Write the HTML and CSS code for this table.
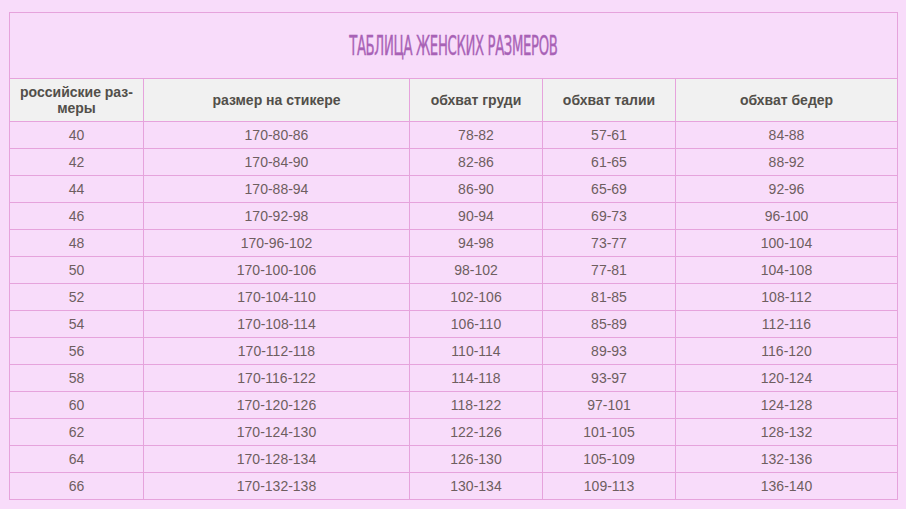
FILE: index.html
```html
<!DOCTYPE html>
<html lang="ru">
<head>
<meta charset="utf-8">
<title>Таблица женских размеров</title>
<link rel="stylesheet" href="styles.css">
</head>
<body>
<table class="sizes">
  <colgroup>
    <col class="c1"><col class="c2"><col class="c3"><col class="c4"><col class="c5">
  </colgroup>
  <thead>
    <tr class="title-row"><th colspan="5"><span class="title">ТАБЛИЦА ЖЕНСКИХ РАЗМЕРОВ</span></th></tr>
    <tr class="head-row">
      <th>российские раз-<br>меры</th>
      <th>размер на стикере</th>
      <th>обхват груди</th>
      <th>обхват талии</th>
      <th>обхват бедер</th>
    </tr>
  </thead>
  <tbody>
    <tr><td>40</td><td>170-80-86</td><td>78-82</td><td>57-61</td><td>84-88</td></tr>
    <tr><td>42</td><td>170-84-90</td><td>82-86</td><td>61-65</td><td>88-92</td></tr>
    <tr><td>44</td><td>170-88-94</td><td>86-90</td><td>65-69</td><td>92-96</td></tr>
    <tr><td>46</td><td>170-92-98</td><td>90-94</td><td>69-73</td><td>96-100</td></tr>
    <tr><td>48</td><td>170-96-102</td><td>94-98</td><td>73-77</td><td>100-104</td></tr>
    <tr><td>50</td><td>170-100-106</td><td>98-102</td><td>77-81</td><td>104-108</td></tr>
    <tr><td>52</td><td>170-104-110</td><td>102-106</td><td>81-85</td><td>108-112</td></tr>
    <tr><td>54</td><td>170-108-114</td><td>106-110</td><td>85-89</td><td>112-116</td></tr>
    <tr><td>56</td><td>170-112-118</td><td>110-114</td><td>89-93</td><td>116-120</td></tr>
    <tr><td>58</td><td>170-116-122</td><td>114-118</td><td>93-97</td><td>120-124</td></tr>
    <tr><td>60</td><td>170-120-126</td><td>118-122</td><td>97-101</td><td>124-128</td></tr>
    <tr><td>62</td><td>170-124-130</td><td>122-126</td><td>101-105</td><td>128-132</td></tr>
    <tr><td>64</td><td>170-128-134</td><td>126-130</td><td>105-109</td><td>132-136</td></tr>
    <tr><td>66</td><td>170-132-138</td><td>130-134</td><td>109-113</td><td>136-140</td></tr>
  </tbody>
</table>
</body>
</html>
```
FILE: styles.css
```css
html, body {
  margin: 0;
  padding: 0;
  background: #f8dcfa;
}
body {
  padding: 12px 0 0 9px;
  font-family: "Liberation Sans", Arial, sans-serif;
}
.sizes {
  border-collapse: collapse;
  width: 888px;
  table-layout: fixed;
}
.c1 { width: 134px; }
.c2 { width: 266px; }
.c3 { width: 133px; }
.c4 { width: 133px; }
.c5 { width: 222px; }
.sizes th, .sizes td {
  border: 1px solid #e6a3dc;
  text-align: center;
  padding: 0;
}
.title-row th {
  height: 65px;
  background: #f8dcfa;
  vertical-align: middle;
}
.title {
  display: inline-block;
  font-family: "DejaVu Sans Condensed", "DejaVu Sans", sans-serif;
  font-weight: 500;
  font-size: 26px;
  color: #a862b6;
  transform: scaleX(0.565);
  letter-spacing: -0.6px;
  -webkit-text-stroke: 0.4px #a862b6;
}
.head-row th {
  height: 42px;
  background: #f1f1f1;
  color: #524f4a;
  font-size: 14px;
  font-weight: bold;
  line-height: 16px;
}
.sizes td {
  height: 26px;
  color: #6e5e60;
  font-size: 14px;
  background: #f8dcfa;
}
```
